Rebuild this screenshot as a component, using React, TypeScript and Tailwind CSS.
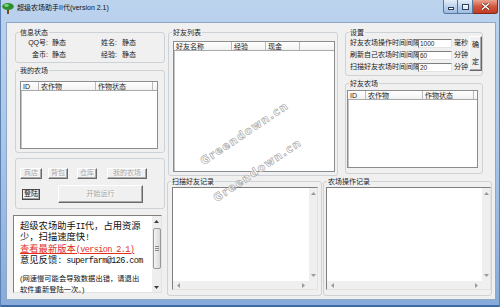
import React from "react";

type Col = [string, string];

const Arrow = ({ dir, c = "#7a7a7a" }: { dir: "up" | "down" | "left" | "right"; c?: string }) => {
  const pts = {
    up: "0,3 2.5,0 5,3",
    down: "0,0 5,0 2.5,3",
    left: "3,0 3,5 0,2.5",
    right: "0,0 0,5 3,2.5",
  }[dir];
  const vertical = dir === "up" || dir === "down";
  return (
    <svg width={vertical ? 5 : 3} height={vertical ? 3 : 5} className="shrink-0">
      <polygon points={pts} fill={c} />
    </svg>
  );
};

function Group({ label, className = "", children }: { label?: string; className?: string; children?: React.ReactNode }) {
  return (
    <fieldset className={`min-w-0 shrink-0 border border-[#cdd2d6] rounded-[3px] ${className}`}>
      {label && <legend className="ml-[3px] px-[1px] h-[9px] leading-[9px]">{label}</legend>}
      {children}
    </fieldset>
  );
}

function ListView({ cols, className = "" }: { cols: Col[]; className?: string }) {
  return (
    <div className={`bg-white border border-[#8b8c8d] shadow-[inset_1px_1px_0_#c4c4c4] ${className}`}>
      <div className="flex h-[9px] border-b border-[#a9a9a9] bg-gradient-to-b from-white to-[#f2f2f2]">
        {cols.map(([t, w]) => (
          <div key={t} className={`${w} shrink-0 border-r border-[#b9b9b9] pl-[2px] leading-[9px] overflow-hidden whitespace-nowrap`}>
            {t}
          </div>
        ))}
      </div>
    </div>
  );
}

function Btn({ children, className = "", disabled = false }: { children: React.ReactNode; className?: string; disabled?: boolean }) {
  return (
    <div
      className={`shrink-0 flex items-center justify-center bg-[#f0f0f0] border border-t-white border-l-white border-b-[#696969] border-r-[#696969] shadow-[inset_-1px_-1px_0_#a9a9a9] ${
        disabled ? "text-[#a5a5a5] [text-shadow:1px_1px_0_#fff]" : "text-[#111]"
      } ${className}`}
    >
      {children}
    </div>
  );
}

function LogBox({ className = "" }: { className?: string }) {
  return (
    <div className={`flex flex-col bg-white border border-t-[#7f7f7f] border-l-[#7f7f7f] border-b-[#e2e2e2] border-r-[#e2e2e2] ${className}`}>
      <div className="flex flex-1">
        <div className="flex-1" />
        <div className="w-[8px] bg-[#efefef] flex flex-col items-center justify-between py-[4px]">
          <Arrow dir="up" c="#9a9a9a" />
          <Arrow dir="down" c="#9a9a9a" />
        </div>
      </div>
      <div className="flex h-[8px]">
        <div className="flex-1 bg-[#efefef] flex items-center justify-between px-[4px]">
          <Arrow dir="left" c="#9a9a9a" />
          <Arrow dir="right" c="#9a9a9a" />
        </div>
        <div className="w-[8px] bg-[#f0f0f0]" />
      </div>
    </div>
  );
}

function Field({ label, value, unit }: { label: string; value: string; unit: string }) {
  return (
    <div className="flex items-center h-[10px]">
      <span className="w-[68px] shrink-0 whitespace-nowrap">{label}</span>
      <div className="w-[34px] h-[9px] shrink-0 bg-white border border-t-[#7f7f7f] border-l-[#7f7f7f] border-b-[#e3e3e3] border-r-[#e3e3e3] leading-[7px] pl-[1px] text-[6.5px]">
        {value}
      </div>
      <span className="ml-[2px] w-[14px] shrink-0 whitespace-nowrap">{unit}</span>
    </div>
  );
}

const mono = "[font-family:'Liberation_Mono',monospace] text-[8.5px] tracking-[-0.6px] leading-none";

function Watermark({ className }: { className: string }) {
  return (
    <div className={`absolute w-0 h-0 pointer-events-none ${className}`}>
      <span className="absolute left-0 top-0 -translate-x-1/2 -translate-y-1/2 rotate-[-34deg] whitespace-nowrap text-[11px] font-bold tracking-[1.2px] text-white [-webkit-text-stroke:0.6px_#a3a3a3] [font-family:'DejaVu_Sans',sans-serif]">
        Greendown.cn
      </span>
    </div>
  );
}

export default function App() {
  return (
    <div className="relative w-[500px] h-[307px] overflow-hidden flex flex-col bg-gradient-to-b from-[#bcd3ee] via-[#a8c5e8] to-[#86abda] shadow-[inset_1px_0_0_#5b82b3,inset_-1px_0_0_#5b82b3,inset_0_-2px_0_#3f6ba4] text-[7px] text-[#1b1b1b] [font-family:'Liberation_Sans','Noto_Sans_CJK_SC',sans-serif]">
      {/* title bar */}
      <div className="h-[22px] shrink-0 flex items-start">
        <svg width="12" height="12" viewBox="0 0 12 12" className="ml-[2px] mt-[2px]">
          <rect x="5" y="6" width="2" height="6" fill="#7b4b1e" />
          <ellipse cx="6" cy="4.5" rx="5.8" ry="3.6" fill="#2c8f2a" />
          <ellipse cx="4.5" cy="3.5" rx="2.4" ry="1.4" fill="#7bd477" />
        </svg>
        <span className="ml-[3px] mt-[3px] leading-[10px] text-[7px] text-[#111] whitespace-nowrap">超级农场助手II代(version 2.1)</span>
        <div className="ml-auto mr-[2px] flex h-[14px]">
          <div className="w-[15px] h-full border border-t-0 border-[#56779f] rounded-bl-[3px] bg-gradient-to-b from-[#e4eef9] via-[#bcd2ec] to-[#9dbbe0] flex items-center justify-center">
            <div className="w-[6px] h-[3px] mt-[3px] bg-white border border-[#2f4058]" />
          </div>
          <div className="w-[15px] h-full border border-t-0 border-l-0 border-[#56779f] bg-gradient-to-b from-[#e4eef9] via-[#bcd2ec] to-[#9dbbe0] flex items-center justify-center">
            <div className="w-[7px] h-[6px] border border-[#2f4058] bg-white/60 shadow-[inset_0_1px_0_#fff]" />
          </div>
          <div className="w-[25px] h-full border border-t-0 border-l-0 border-[#7d2b1d] rounded-br-[3px] bg-gradient-to-b from-[#e9a390] via-[#d2563c] to-[#c13b21] flex items-center justify-center">
            <svg width="9" height="7" viewBox="0 0 9 7">
              <path d="M1 0.5 L8 6.5 M8 0.5 L1 6.5" stroke="#5b1a10" strokeWidth="2.6" />
              <path d="M1 0.5 L8 6.5 M8 0.5 L1 6.5" stroke="#fff" strokeWidth="1.5" />
            </svg>
          </div>
        </div>
      </div>

      {/* window body */}
      <div className="flex-1 flex pl-[6px] pr-[4px] pb-[7px]">
        <div className="flex-1 flex bg-[#f0f0f0] border border-[#90a8c6] pt-[5px] pl-[8px]">
          {/* left column */}
          <div className="w-[150px] shrink-0 flex flex-col">
            <Group label="信息状态" className="h-[35px]">
              <div className="flex flex-col gap-[2px] pt-[1px]">
                <div className="flex h-[10px] leading-[10px]">
                  <span className="w-[32px] text-right">QQ号:</span>
                  <span className="ml-[4px] w-[47px]">静态</span>
                  <span className="w-[18px] text-right">姓名:</span>
                  <span className="ml-[5px]">静态</span>
                </div>
                <div className="flex h-[10px] leading-[10px]">
                  <span className="w-[32px] text-right">金币:</span>
                  <span className="ml-[4px] w-[47px]">静态</span>
                  <span className="w-[18px] text-right">经验:</span>
                  <span className="ml-[5px]">静态</span>
                </div>
              </div>
            </Group>

            <Group label="我的农场" className="mt-[3px] h-[87px]">
              <ListView
                className="ml-[4px] mt-[6px] w-[138px] h-[68px]"
                cols={[
                  ["ID", "w-[18px]"],
                  ["农作物", "w-[57px]"],
                  ["作物状态", "w-[57px]"],
                ]}
              />
            </Group>

            <Group className="mt-[5px] h-[51px]">
              <div className="flex mt-[9px] h-[11px]">
                <Btn disabled className="ml-[4px] w-[22px]">商店</Btn>
                <Btn disabled className="ml-[6px] w-[20px]">背包</Btn>
                <Btn disabled className="ml-[9px] w-[20px]">仓库</Btn>
                <Btn disabled className="ml-[10px] w-[40px]">我的农场</Btn>
              </div>
              <div className="flex items-center mt-[6px]">
                <div className="ml-[6px] w-[18px] h-[11px] shrink-0 flex items-center justify-center bg-[#f4f4f4] border border-[#4a4a4a] shadow-[inset_-1px_-1px_0_#a0a0a0] text-[#111]">
                  登陆
                </div>
                <Btn disabled className="ml-[18px] w-[85px] h-[18px]">开始运行</Btn>
              </div>
            </Group>

            <div className="-ml-[2px] mt-[6px] w-[149px] h-[78px] shrink-0 flex bg-white border border-t-[#7f7f7f] border-l-[#7f7f7f] border-b-[#e2e2e2] border-r-[#e2e2e2]">
              <div className="flex-1 pl-[6px] pt-[5px] text-[9.3px] text-[#111] whitespace-nowrap">
                <div className="h-[11.3px] leading-[11.3px]">
                  超级农场助手<span className={mono}>II</span>代，占用资源
                </div>
                <div className="h-[11.3px] leading-[11.3px]">
                  少，扫描速度快<span className={mono}>!</span>
                </div>
                <div className="h-[11.3px] leading-[11.3px] text-[#e2301c] underline">
                  查看最新版本<span className={mono}>(version 2.1)</span>
                </div>
                <div className="h-[11.3px] leading-[11.3px]">
                  意见反馈<span className={mono}>: superfarm@126.com</span>
                </div>
                <div className="mt-[7px] text-[7.3px]">
                  <div className="h-[11px] leading-[11px]">(网速慢可能会导致数据出错，请退出</div>
                  <div className="h-[11px] leading-[11px]">软件重新登陆一次。)</div>
                </div>
              </div>
              <div className="w-[9px] bg-[#eeeeee] flex flex-col items-center">
                <div className="h-[10px] flex items-center">
                  <Arrow dir="up" c="#3c3c3c" />
                </div>
                <div className="mt-[2px] w-[8px] h-[41px] rounded-[2px] border border-[#989898] bg-gradient-to-r from-[#f4f4f4] to-[#d9d9d9] flex flex-col items-center justify-center gap-[1px]">
                  <div className="w-[4px] h-px bg-[#8a8a8a]" />
                  <div className="w-[4px] h-px bg-[#8a8a8a]" />
                  <div className="w-[4px] h-px bg-[#8a8a8a]" />
                </div>
                <div className="flex-1" />
                <div className="h-[10px] flex items-center">
                  <Arrow dir="down" c="#3c3c3c" />
                </div>
              </div>
            </div>
          </div>

          {/* right area */}
          <div className="ml-[3px] w-[324px] shrink-0 flex flex-col">
            <div className="flex h-[148px] shrink-0">
              <Group label="好友列表" className="w-[170px] h-[148px]">
                <ListView
                  className="ml-[4px] mt-[4px] w-[162px] h-[131px]"
                  cols={[
                    ["好友名称", "w-[58px]"],
                    ["经验", "w-[34px]"],
                    ["现金", "w-[34px]"],
                  ]}
                />
              </Group>

              <div className="ml-[7px] w-[138px] shrink-0 flex flex-col">
                <Group label="设置" className="h-[48px]">
                  <div className="flex pt-[1px] pl-[4px]">
                    <div className="flex flex-col gap-[2px]">
                      <Field label="好友农场操作时间间隔" value="1000" unit="毫秒" />
                      <Field label="刷新自己农场时间间隔" value="60" unit="分钟" />
                      <Field label="扫描好友农场时间间隔" value="20" unit="分钟" />
                    </div>
                    <Btn className="ml-[1px] -mt-[2px] w-[13px] h-[35px] flex-col gap-[6px]">
                      <span>确</span>
                      <span>定</span>
                    </Btn>
                  </div>
                </Group>

                <Group label="好友农场" className="mt-[3px] h-[95px]">
                  <ListView
                    className="ml-[1px] mt-[2px] w-[131px] h-[78px]"
                    cols={[
                      ["ID", "w-[18px]"],
                      ["农作物", "w-[57px]"],
                      ["作物状态", "w-[51px]"],
                    ]}
                  />
                </Group>
              </div>
            </div>

            <div className="flex mt-[1px] -ml-[1px]">
              <Group label="扫描好友记录" className="w-[155px] h-[119px]">
                <LogBox className="ml-[4px] mt-[1px] w-[146px] h-[103px]" />
              </Group>
              <Group label="农场操作记录" className="ml-[1px] w-[169px] h-[119px]">
                <LogBox className="ml-[2px] mt-[1px] w-[165px] h-[103px]" />
              </Group>
            </div>
          </div>
        </div>
      </div>

      <Watermark className="left-[245px] top-[134px]" />
      <Watermark className="left-[258px] top-[171px]" />
    </div>
  );
}
